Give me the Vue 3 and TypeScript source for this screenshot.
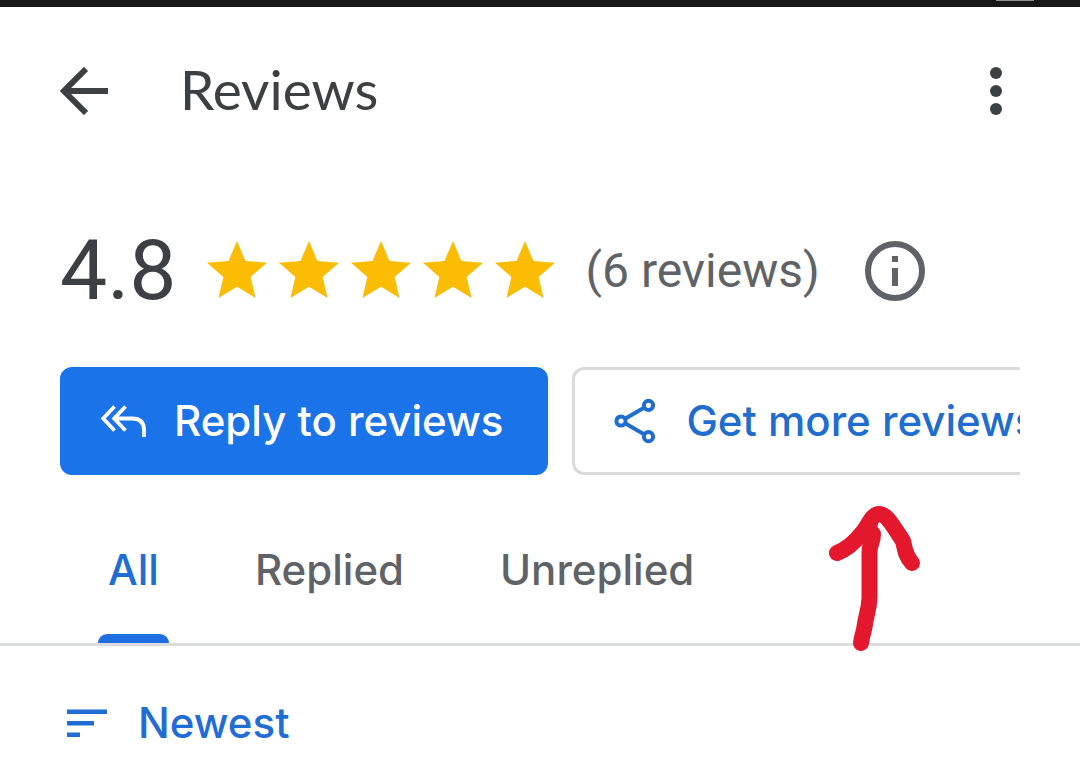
<script setup lang="ts">
import { ref } from 'vue'

const tabs = ['All', 'Replied', 'Unreplied']
const activeTab = ref('All')
const rating = 4.8
const reviewCount = 6
</script>

<template>
  <div class="screen">
    <div class="status-bar"><span class="status-pill"></span></div>

    <header class="app-bar">
      <button class="icon-button" type="button" aria-label="Back">
        <svg width="48" height="48" viewBox="0 0 48 48" fill="none" stroke="currentColor" stroke-width="6">
          <path d="M48 24H5M26 2 4 24l22 22" />
        </svg>
      </button>
      <h1>Reviews</h1>
      <button class="icon-button" type="button" aria-label="More options">
        <svg width="48" height="48" viewBox="0 0 48 48" fill="currentColor">
          <circle cx="24" cy="6" r="6" />
          <circle cx="24" cy="24" r="6" />
          <circle cx="24" cy="42" r="6" />
        </svg>
      </button>
    </header>

    <section class="summary">
      <span class="score">{{ rating }}</span>
      <div class="stars" role="img" aria-label="Rated 4.8 out of 5">
        <svg v-for="n in 5" :key="n" width="60" height="60" viewBox="2 2 20 20" fill="#fbbc04">
          <path d="M12 17.270 18.180 21l-1.640-7.030L22 9.240l-7.190-.610L12 2 9.190 8.630 2 9.240l5.460 4.730L5.820 21z" />
        </svg>
      </div>
      <span class="count">({{ reviewCount }} reviews)</span>
      <button class="icon-button info" type="button" aria-label="About ratings">
        <svg width="60" height="60" viewBox="0 0 60 60" fill="none" stroke="currentColor" stroke-width="6">
          <circle cx="30" cy="30" r="27" />
          <path d="M30 15v6M30 27v18" />
        </svg>
      </button>
    </section>

    <div class="actions">
      <button class="action primary" type="button">
        <svg width="48" height="36" viewBox="0 0 48 36" fill="none" stroke="currentColor" stroke-width="3.800">
          <path d="M14.500 3.500 3.200 15.500l11.300 12M25.500 3.500 14.200 15.500l11.300 12M14.200 15.500H32Q44 15.500 44 27v7" />
        </svg>
        <span>Reply to reviews</span>
      </button>
      <button class="action outlined" type="button">
        <svg width="48" height="48" viewBox="0 0 48 48" fill="none" stroke="currentColor" stroke-width="4">
          <circle cx="9" cy="24" r="4.600" />
          <circle cx="36.500" cy="8.300" r="4.600" />
          <circle cx="36.500" cy="39.700" r="4.600" />
          <path d="M13 21.700 32.500 10.600M13 26.300l19.500 11.100" />
        </svg>
        <span>Get more reviews</span>
      </button>
    </div>

    <nav class="tabs" role="tablist">
      <button
        v-for="tab in tabs"
        :key="tab"
        class="tab"
        :class="{ active: tab === activeTab }"
        type="button"
        role="tab"
        :aria-selected="tab === activeTab"
        @click="activeTab = tab"
      >{{ tab }}</button>
    </nav>

    <button class="sort" type="button">
      <svg width="42" height="30" viewBox="0 0 42 30" fill="currentColor">
        <path d="M1 1.500h40v4.500H1zM1 13h27v4.500H1zM1 24.500h13v4.500H1z" />
      </svg>
      <span>Newest</span>
    </button>

    <svg class="pointer" width="100" height="150" viewBox="0 0 100 150" fill="none" stroke="#e3182d" stroke-width="16" stroke-linecap="round" stroke-linejoin="round">
      <path d="M12 49C22 45 30 38 37 29 43 22 47 10 54 10 62 10 68 22 78 37 80 45 80 51 87 59" />
      <path d="M48 30C48 38 44.500 40 44.500 48V94C44 106 41 112 40 120 39 128 37 131 36 139" />
      <path d="M38 38V24L52 12 51 24Z" fill="#e3182d" stroke-width="3" />
    </svg>
  </div>
</template>

<style>
body {
  margin: 0;
  background: #fff;
}
</style>

<style scoped>
.screen {
  position: relative;
  overflow: hidden;
  min-height: 100vh;
  background: #fff;
  color: #3c4043;
  font-family: Inter, Roboto, sans-serif;
}

button {
  margin: 0;
  padding: 0;
  border: 0;
  background: none;
  color: inherit;
  font: inherit;
  cursor: pointer;
}

svg {
  display: block;
  flex: none;
}

.status-bar {
  position: relative;
  height: 7px;
  background: #171717;
}

.status-pill {
  position: absolute;
  top: 0;
  right: 46px;
  width: 38px;
  height: 1px;
  background: #8d918e;
}

.app-bar {
  display: flex;
  align-items: center;
  height: 168px;
  padding: 0 60px;
}

h1 {
  flex: 1;
  margin: 0 0 0 72px;
  padding-bottom: 4px;
  font-family: Lato, sans-serif;
  font-size: 55px;
  font-weight: 400;
  line-height: 64px;
}

.summary {
  display: flex;
  align-items: center;
  height: 192px;
  padding: 0 60px;
}

.score {
  font-family: Roboto, sans-serif;
  font-size: 84px;
  line-height: 96px;
}

.stars {
  display: flex;
  gap: 12px;
  margin-left: 30px;
}

.count {
  margin-left: 31px;
  color: #5f6368;
  font-family: Roboto, sans-serif;
  font-size: 48px;
  line-height: 56px;
}

.info {
  margin-left: 45px;
  color: #5f6368;
}

.actions {
  display: flex;
  gap: 24px;
  margin: 0 60px;
  overflow: hidden;
}

.action {
  display: flex;
  flex: none;
  align-items: center;
  gap: 26px;
  box-sizing: border-box;
  height: 108px;
  padding: 0 45px 0 40px;
  border-radius: 12px;
  font-size: 42px;
  font-weight: 500;
  line-height: 48px;
  white-space: nowrap;
}

.primary {
  background: #1a73e8;
  color: #fff;
}

.outlined {
  padding-left: 37px;
  border: 3px solid #dadada;
  color: #1f6dcf;
}

.tabs {
  display: flex;
  gap: 48px;
  height: 168px;
  padding: 0 84px;
  border-bottom: 3px solid #dadcde;
}

.tab {
  position: relative;
  padding: 22px 24px 0;
  color: #5f6368;
  font-size: 42px;
  font-weight: 500;
  line-height: 48px;
}

.tab.active {
  color: #1f6dd5;
}

.tab.active::after {
  position: absolute;
  right: 14px;
  bottom: 0;
  left: 14px;
  height: 9px;
  border-radius: 9px 9px 0 0;
  background: #1f6fe0;
  content: '';
}

.sort {
  display: flex;
  align-items: center;
  gap: 30px;
  margin: 53px 66px 0;
  color: #1f6dd5;
  font-size: 42px;
  font-weight: 500;
  line-height: 48px;
}

.pointer {
  position: absolute;
  top: 504px;
  left: 825px;
  pointer-events: none;
}
</style>
